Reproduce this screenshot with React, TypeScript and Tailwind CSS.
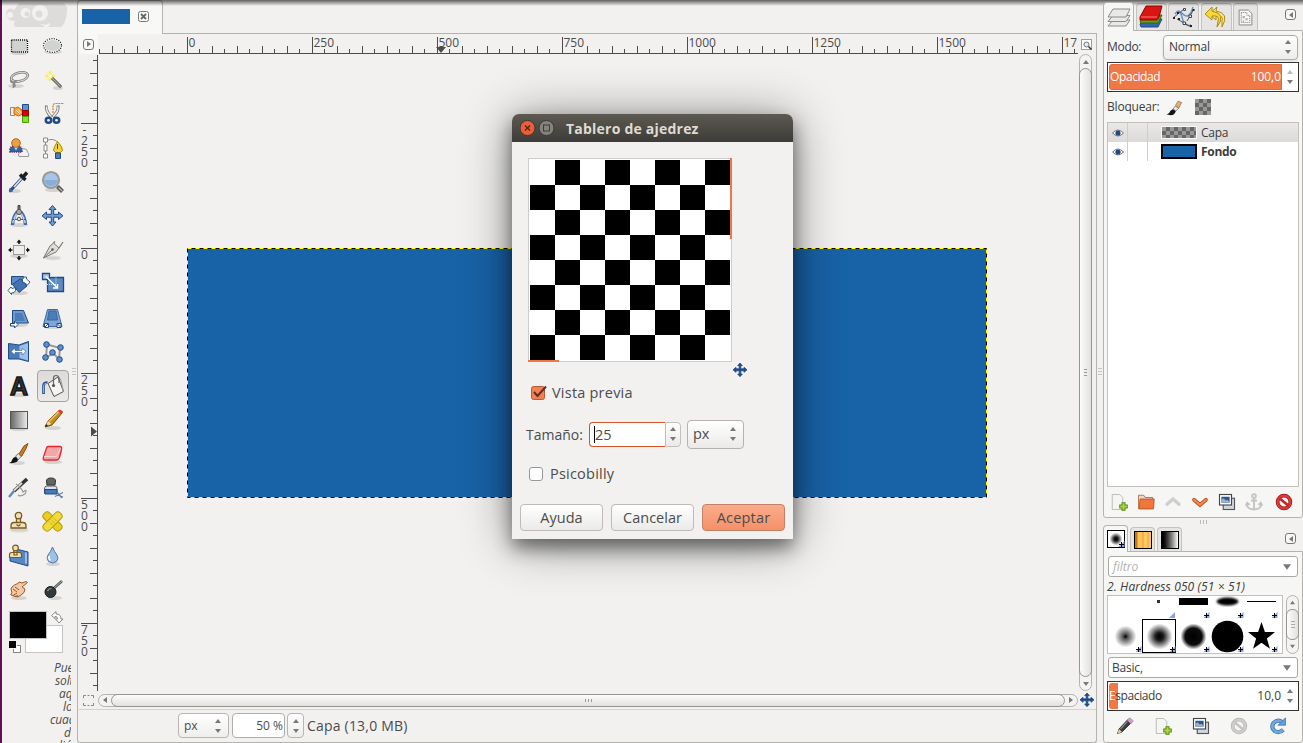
import React from "react";

type Kids = { children?: React.ReactNode };

function Ico({ children, size = 24 }: Kids & { size?: number }) {
  return (
    <svg width={size} height={size} viewBox="0 0 24 24" className="block shrink-0">
      {children}
    </svg>
  );
}

const NAVY = "#204a87";
const STEEL = "#5d8ac2";

const Shade = ({ cx = 12, cy = 20, rx = 9 }: { cx?: number; cy?: number; rx?: number }) => (
  <ellipse cx={cx} cy={cy} rx={rx} ry="2" fill="#000" opacity=".12" />
);

const moveArrows = "M12 1.5 15.5 5.5H13.2V10.3H18V8L22.5 11.8 18 15.5V13.2H13.2V18H15.5L12 22 8.5 18H10.8V13.2H6V15.5L1.5 11.8 6 8V10.3H10.8V5.5H8.5Z";

function MoveIcon({ size = 24, dark = false }: { size?: number; dark?: boolean }) {
  return (
    <Ico size={size}>
      <path d={moveArrows} fill={dark ? NAVY : "#6f9bd1"} stroke={NAVY} strokeWidth={dark ? 1.2 : 1} />
    </Ico>
  );
}

const tools: React.ReactNode[] = [
  <g>
    <Shade cy={19} />
    <rect x="4.5" y="6" width="16" height="12" fill="#d0d3ce" stroke="#fff" strokeWidth="1.2" />
    <rect x="4.5" y="6" width="16" height="12" fill="none" stroke="#000" strokeDasharray="1.1 1" strokeWidth="1.3" />
  </g>,
  <g>
    <Shade cy={18} />
    <ellipse cx="11.5" cy="11.5" rx="9" ry="6.6" fill="#d0d3ce" stroke="#fff" strokeWidth="2" />
    <ellipse cx="11.5" cy="11.5" rx="9" ry="6.8" fill="none" stroke="#222" strokeDasharray="1.2 1.2" strokeWidth="1.2" />
  </g>,
  <g fill="none">
    <Shade cx={9} cy={18} rx={8} />
    <ellipse cx="12.5" cy="9" rx="8.5" ry="4.3" stroke="#777" strokeWidth="2.6" transform="rotate(-14 12 9)" />
    <ellipse cx="12.5" cy="9" rx="8.5" ry="4.3" stroke="#ddd" strokeWidth="1" transform="rotate(-14 12 9)" />
    <path d="M4 12c-1.500 3 4 3 5.500 1M6.500 14v5l1.500-1-1-4" stroke="#888" strokeWidth="1.600" />
  </g>,
  <g>
    <Shade cx={17} cy={20} rx={5} />
    <circle cx="9" cy="8" r="4.500" fill="#fff36b" opacity=".6" />
    <path d="M9 3v10M4 8h10" stroke="#f5e340" strokeWidth="1" />
    <circle cx="9" cy="8" r="1.800" fill="#fffde0" />
    <path d="M11 10 20 19" stroke="#4b4e46" strokeWidth="3" />
    <path d="M11 10 19.500 18.500" stroke="#a8ac9f" strokeWidth="1.300" />
  </g>,
  <g>
    <path d="M3.500 5.500h4v8h-4z" fill="#eee" stroke="#888" />
    <path d="M7 6.500 11 5l4 3 .5 4-4 2-4.500-2z" fill="#f9a23a" stroke="#d06b00" />
    <path d="m9 8 4 4M11 7l3 4" stroke="#fff0cf" strokeWidth=".8" />
    <path d="M15.500 2.500h6v6h-6z" fill="#5f92d1" stroke={NAVY} />
    <path d="M15.500 8.500h6v6h-6z" fill="#d80000" stroke="#900" />
    <path d="M15.500 14.500h6v6h-6z" fill="#8be02a" stroke="#4e9a06" />
  </g>,
  <g fill="none">
    <path d="M12 11V4.500Q12 1.500 15 1.500h8" stroke="#e08010" strokeWidth="1.200" strokeDasharray="2 .7" />
    <path d="M5.500 3.500c-1 4 1.500 8 4.500 11.500M17 3.500c1 4-1.500 8-5.500 11.500" stroke="#7b7d78" strokeWidth="3" />
    <path d="M5.600 4.500c-.5 3 1.500 7 4.300 10M16.900 4.500c.5 3-1.500 7-5 10" stroke="#eee" strokeWidth="1.400" />
    <ellipse cx="7.500" cy="18.200" rx="2.700" ry="2.500" stroke={NAVY} strokeWidth="2.500" />
    <ellipse cx="15.500" cy="18.200" rx="2.700" ry="2.500" stroke={NAVY} strokeWidth="2.500" />
  </g>,
  <g>
    <path d="M12 20.500q-2-3 1-4 0-4 4-3.800 3.500 0 3.500 3.500 2 1 1 4.300z" fill="#f2f2f2" stroke="#999" />
    <path d="M3 16v-3q1-3 4-3h4q4 0 4 6z" fill="#3465a4" stroke="#5c3566" strokeWidth="1.500" strokeDasharray="1.300 .8" />
    <path d="m7 10.500 2 4 2-4" fill="#dde6f2" />
    <circle cx="9" cy="7" r="4.300" fill="#e9a13f" stroke="#b5651d" />
  </g>,
  <g fill="none" stroke="#8a8c88">
    <path d="M4.500 3.500v17M4.500 5q8-4 13 2" />
    <path d="M2.500 2h4v4h-4zM3 9h3v6H3zM2.500 18h4v4h-4z" fill="#fff" />
    <path d="M16.500 5.500q-4 6-4 9l2 2h5l2-2q0-4-5-9z" fill="#eed43a" stroke="#a98600" />
    <path d="M16.500 8v5" stroke="#5a4a00" />
    <path d="M14.500 17h5v5.500h-5z" fill="#4a7dbd" stroke={NAVY} />
  </g>,
  <g>
    <Shade cx={8} cy={21} rx={6} />
    <path d="M4 20 16 7" stroke="#274f83" strokeWidth="3.200" />
    <path d="M7 17 15 8" stroke="#d7e6f7" strokeWidth="1.600" />
    <path d="m3 17.500 3 4-3.500 1q-1.500-2 .5-5z" fill="#3465a4" />
    <path d="m13 4.500 5.500 5.500M15.500 7.500 20 2.500" stroke="#1c1f24" strokeWidth="3.400" />
  </g>,
  <g>
    <Shade cx={12} cy={20} rx={8} />
    <circle cx="10" cy="10" r="8" fill="#a8c4ea" stroke="#999b96" strokeWidth="2.200" />
    <path d="M3.500 10h13a6.500 6 0 0 1-13 0z" fill="#88add9" />
    <path d="m16.500 16.500 5 5" stroke="#555753" strokeWidth="4" />
    <path d="m17.500 17.500 3.500 3.500" stroke="#bbb" strokeWidth="1.300" />
  </g>,
  <g>
    <Shade cy={21} />
    <path d="M10 8Q6 13 5.500 21M14 8q4 5 4.500 13" stroke="#456da5" strokeWidth="3.400" fill="none" />
    <path d="M10 9q-3 5-4.300 10M14 9q3 5 4.300 10" stroke="#b9cde8" strokeWidth="1.500" fill="none" />
    <path d="M11 1.500h2V6h-2z" fill="#777" stroke="#444" />
    <circle cx="12" cy="8" r="2.600" fill="#aaa" stroke="#555" />
    <path d="M5 15.500h14" stroke="#555" strokeDasharray="2 1" />
    <circle cx="12" cy="15" r="1.800" fill="#ddd" stroke="#555" />
  </g>,
  <path d={moveArrows} fill="#6f9bd1" stroke={NAVY} transform="translate(-.5 0)" />,
  <g>
    <Shade cy={18} />
    <rect x="6.500" y="7.500" width="11" height="9" fill="#eee" stroke="#999" />
    <path d="m12 1.500 2.500 3h-5zM12 22.500l2.500-3h-5zM1 12l3-2.500v5zM23 12l-3-2.500v5z" fill="#111" />
    <path d="M12 3v3M12 18v3M3 12h2.500M19 12h2" stroke="#111" strokeWidth="1.600" />
  </g>,
  <g stroke="#777">
    <Shade cx={12} cy={20} rx={8} />
    <path d="M2.500 20 9 8l3.500-3L18 10l-3 4z" fill="#deded9" />
    <path d="M12.500 5 14 3.500M18 10l4-6" strokeWidth="1.200" />
    <path d="M2.500 20 11 12" />
    <circle cx="11.500" cy="11.500" r="1" fill="#555" />
  </g>,
  <g>
    <Shade cy={21} />
    <path d="M4.500 4.500h12v8h-12z" fill={STEEL} stroke={NAVY} />
    <path d="m5.500 12.500 8-6 6.500 7.500-8 6.500z" fill="#4272b0" stroke={NAVY} />
    <path d="M15.500 10V7.500q1-3.500 4-2.500V7l3.500 3-2.500 3-3.500-2.500zM8.500 15.500v3q-1 3-4 2.500v1.500l-3.500-4L4 15l1 1.500z" fill="#fff" stroke={NAVY} strokeWidth=".9" />
  </g>,
  <g>
    <path d="M6.500 5.500h16v14h-16z" fill={STEEL} stroke={NAVY} strokeWidth="1.300" />
    <path d="M1.500 1.500h7v6h-7z" fill="#a8c5e8" stroke={NAVY} strokeWidth="1.300" />
    <path d="M9 4.500h6v8H4.500V9" fill="none" stroke="#cfe0f4" strokeDasharray="1 1" />
    <path d="m5 4.500 11 11M16.500 12v4H12" fill="none" stroke="#fff" strokeWidth="1.500" />
  </g>,
  <g>
    <Shade cy={19} />
    <path d="M5.500 4.500h11l5 12.500h-16z" fill="#6f9acd" stroke={NAVY} />
    <path d="M8 7h7l3 8H8z" fill="#4d7db9" />
    <path d="M3.500 17.500h4v-2.500l3.500 3.500-3.500 3.500V20h-4z" fill="#fff" stroke={NAVY} />
  </g>,
  <g>
    <Shade cy={21} />
    <path d="M6.500 3.500h10l4.500 17H2z" fill="#7fa6d5" stroke="#3f6aa5" />
    <path d="M8 5h7l1.500 9h-10z" fill="#4d7db9" stroke="#3a66a0" />
    <path d="M3.500 17.500h4v4h-4zM16 17.500h4v4h-4z" fill="#fff" stroke={NAVY} />
    <path d="m4 21 3-3M19.500 21l-3-3" stroke={NAVY} />
  </g>,
  <g>
    <path d="M1.500 3.500 12 5l9.500-3.500v20L12 19H1.500z" fill="#4b7ab6" stroke={NAVY} />
    <path d="M12.500 6v12l8.500 2.500V3z" fill="#9fc0e6" />
    <path d="m4 11.500 4-3.500v2.500h7V8l4 3.500-4 3.500v-2.500H8V15z" fill="#fff" stroke="#456da5" strokeWidth=".7" />
  </g>,
  <g>
    <path d="M6 4.500 19 8 18 19 12 13 5 18z" fill="none" stroke="#9a9c98" strokeWidth="2" />
    {[[5.500, 4.500], [19.500, 7.500], [11.500, 12.500], [4.500, 17.500], [18.500, 19.500]].map(([x, y]) => (
      <circle key={`${x}-${y}`} cx={x} cy={y} r="2.800" fill="#5d8fce" stroke={NAVY} />
    ))}
  </g>,
  <g>
    <Shade cy={21} />
    <text x="12" y="20.500" textAnchor="middle" fontFamily="Liberation Sans" fontWeight="700" fontSize="25" fill="#2e3436" stroke="#151515" strokeWidth="1.400">A</text>
  </g>,
  <g>
    <path d="M2.500 20v-8.500q0-3 4-3" stroke={NAVY} strokeWidth="2.600" fill="none" />
    <path d="M2.500 19v-7.500q0-2 3.500-2.500" stroke="#8db0dd" strokeWidth="1" fill="none" />
    <path d="m7 9.500 10-6.500 5.500 14.500-9.500 5z" fill="#f4f4f1" stroke="#555" />
    <path d="m17 3 2.500 2 3 12.500" fill="none" stroke="#999" />
    <path d="M12.500 11V4q0-2.500 2.500-2.500t3 2.500v5" fill="none" stroke="#666" strokeWidth="1.200" />
    <circle cx="12.500" cy="11.500" r="1.600" fill="#555" />
  </g>,
  <g>
    <Shade cy={21} />
    <rect x="3.500" y="3.500" width="17" height="17" fill="url(#gray)" stroke="#555" />
  </g>,
  <g>
    <Shade cx={12} cy={20} rx={8} />
    <path d="m4 19 3-6L18 2.500l3.500 2L11 17z" fill="#c58a22" stroke="#7a4f00" />
    <path d="m8 13.500 10-10" stroke="#efc468" strokeWidth="1.500" />
    <path d="m17 3 2-1.500 3 2L20 6z" fill="#e33" />
    <path d="M4.500 18 7 13l3.500 3z" fill="#eed7a0" />
    <path d="m4 19 1-3 2 1.500z" fill="#222" />
  </g>,
  <g>
    <Shade cx={11} cy={21} rx={7} />
    <path d="m12 12 5-8 4-2.500-2 5-4.500 8z" fill="#d17a22" stroke="#8a4a0c" />
    <path d="m8.500 14 3-2.500 2.500 3-3 3.500z" fill="#e5e5e5" stroke="#777" />
    <path d="M2 21q3-1 3.500-4 2-3 4-1.500Q13 19 8 20.500q-3 1-6 .5z" fill="#111" />
  </g>,
  <g>
    <Shade cy={20} />
    <path d="M7 4.500h12q2 0 1.500 3l-2 8q-1 2.500-3 2.500h-12q-2 0-1-3l3-9q.5-1.500 1.500-1.500z" fill="#f2a7a7" stroke="#e8262a" strokeWidth="1.300" />
    <path d="M3 14.500h12.500l4-8" fill="none" stroke="#f7d5d5" />
  </g>,
  <g>
    <path d="M2 21 7 15" stroke={STEEL} strokeWidth="2.500" />
    <path d="m7 15 13-12" stroke="#333" strokeWidth="3.600" />
    <path d="m7 14.500 8-7.500" stroke="#ddd" strokeWidth="1.800" />
    <path d="M9 8q5 3 7 8 5-4 2 2-5 3-7 1" fill="none" stroke="#999" strokeWidth="1.200" />
  </g>,
  <g>
    <path d="M5 10q-1.500 1-1.500 3v4.500h12.500v-4.500q0-2-1.500-3z" fill="#d8e2f0" stroke="#555" />
    <path d="M4 13.500h12V18H4z" fill="#4a79b7" stroke={NAVY} />
    <path d="M5.500 5q0-3 4.500-3t4.500 3l-.5 4H6z" fill="#626663" stroke="#333" />
    <path d="m14 20.500 8-4M16 16l5 6M22 21l-6-2" stroke="#5f7fae" strokeWidth="1.200" />
  </g>,
  <g fill="#efe0b6" stroke="#7c5a1e" strokeWidth="1.300">
    <Shade cy={20} />
    <path d="M9.500 8.500h4v5h-4z" />
    <circle cx="11.500" cy="5.500" r="3.200" />
    <path d="M7 12.500h9q3 0 3 3.500v2H4v-2q0-3.500 3-3.500z" />
    <path d="m9.500 14.500 2 1.500 2-1.500" />
  </g>,
  <g stroke="#b89600" strokeWidth="1">
    <rect x="0" y="7.500" width="23" height="8" rx="3.500" transform="rotate(45 11.500 11.500)" fill="#e8cf1e" />
    <rect x="0" y="7.500" width="23" height="8" rx="3.500" transform="rotate(-45 11.500 11.500)" fill="#f0dc38" />
    <path d="m8 11.500 4 4M10 9.500l4 4M12 7.500l4 4" stroke="#a98600" strokeDasharray="1 1" />
  </g>,
  <g>
    <path d="m9 5 12 3v14L3 17v-5z" fill="#5787c2" stroke={NAVY} />
    <path d="M19 8.500v11" stroke="#b4d0ef" strokeWidth="1.500" />
    <g fill="#efe0b6" stroke="#7c5a1e" strokeWidth="1.200">
      <path d="M7 6h3v5H7zM4.500 8.500h8q2 0 2 2.500v2.500h-12V11q0-2.500 2-2.500z" />
      <circle cx="8.500" cy="4" r="2.800" />
    </g>
  </g>,
  <g>
    <Shade cy={20} rx={7} />
    <path d="M11.500 3q1.500 4.500 4.500 8 2 4-.5 6.500-3.500 3-8 0Q5 14.500 7 11q3-3.500 4.500-8z" fill="#9fc1e8" stroke="#4a78b4" />
    <path d="M8.500 12q-1.500 2.500 1 4.500" fill="none" stroke="#fff" strokeWidth="1.600" />
  </g>,
  <g>
    <Shade cy={20} rx={8} />
    <path d="M5 9q3-3 6-3.500l1-1.500 3 1 4-1.500 1.500 1L15 9l3 2q0 4-4 6-3 3-6 1.500L4 17q-1-1 1-2l-1-4z" fill="#f2c9a6" stroke="#9d5a27" />
    <path d="m6 11 4 3M8 9l4 3M10 15l-4 2.500M11 17.500l-3 1" stroke="#9d5a27" />
  </g>,
  <g>
    <Shade cx={14} cy={20} rx={7} />
    <path d="m12 11 9-8" stroke="#555753" strokeWidth="2.600" />
    <path d="m13 10 8-7" stroke="#aaa" strokeWidth="1" />
    <circle cx="9.500" cy="14" r="5.500" fill="#33383a" stroke="#1a1c1d" />
    <path d="M6.500 13q1-2.500 4-2.500" stroke="#999" fill="none" strokeWidth="1.200" />
  </g>,
];

const SELECTED_TOOL = 21;

function Wilber() {
  return (
    <svg width="64" height="28" viewBox="0 0 64 28" className="block">
      <path d="M1 12Q4 6 9 10L14 3h44q5 2 4 10-2 12-6 14H12q-5 0-2-6-9 0-9-9z" fill="#dddcdb" />
      <g fill="#f2f1f0">
        <circle cx="5" cy="15" r="3" />
        <circle cx="20.500" cy="13" r="5" />
        <circle cx="35" cy="13" r="8" />
        <path d="M35 24q8 2 10-2v3q-1 2-5 2z" />
      </g>
      <circle cx="22" cy="14" r="2.500" fill="#dddcdb" />
      <circle cx="34" cy="14" r="3.500" fill="#dddcdb" />
    </svg>
  );
}

const hint: [string, string][] = [
  ["Puede", "pl-[52px]"],
  ["soltar", "pl-[53px]"],
  ["aquí", "pl-[57px]"],
  ["los", "pl-[61px]"],
  ["cuadros", "pl-[48px]"],
  ["de", "pl-[62px]"],
  ["diálogos", "pl-[53px]"],
];

function Toolbox() {
  return (
    <aside className="flex w-[75px] shrink-0 flex-col overflow-hidden">
      <div className="h-[29px] shrink-0 pl-[3px]">
        <Wilber />
      </div>
      <div className="grid w-[68px] grid-cols-[34px_34px] auto-rows-[34px]">
        {tools.map((t, i) => (
          <div
            key={i}
            className={
              i === SELECTED_TOOL
                ? "m-px flex items-center justify-center rounded-[4px] border border-[#a5a3a0] bg-gradient-to-b from-[#dddbd9] to-[#eceae8]"
                : "flex items-center justify-center"
            }
          >
            <Ico>{t}</Ico>
          </div>
        ))}
      </div>
      <div className="mt-[4px] ml-[7px] h-[43px] w-[56px] shrink-0">
        <svg width="56" height="43" viewBox="0 0 56 43" className="block">
          <rect x="16.500" y="14.500" width="37" height="27" fill="#fff" stroke="#c6c3c0" />
          <rect x=".5" y=".5" width="37" height="27" fill="#000" stroke="#c6c3c0" />
          <rect x="4.500" y="34.500" width="7" height="7" fill="#fff" stroke="#888" />
          <rect x="0" y="30" width="8" height="8" fill="#f2f1f0" />
          <rect x="0" y="30" width="7" height="7" fill="#000" />
          <path d="m42.500 4.500 4.500-4v2.500q5 0 5 5h2l-4 4-3.500-4h2q0-3-2.500-2.500v2z" fill="#fff" stroke="#888" />
        </svg>
      </div>
      <div className="mt-[7px] w-[69px] overflow-hidden whitespace-nowrap text-[12px] leading-[13px] text-[#4c4c4c] italic tracking-[-0.150px]">
        {hint.map(([word, pad]) => (
          <div key={word} className={pad}>
            {word}
          </div>
        ))}
      </div>
    </aside>
  );
}

function range(from: number, to: number) {
  const out: number[] = [];
  for (let k = from; k <= to; k++) out.push(k);
  return out;
}

const tickLen = (k: number) => (k % 10 === 0 ? 16 : k % 2 === 0 ? 7 : 4);

function HRuler() {
  return (
    <svg width="980" height="18" viewBox="98 36 980 18" className="block" fontFamily="Open Sans" fontSize="12">
      <path d="M99 53.500H1078" stroke="#4c4c4c" />
      {range(-7, 71).map((k) => {
        const x = Math.floor(187 + k * 12.5) + 0.5;
        return <path key={k} d={`M${x} ${53 - tickLen(k)}V53`} stroke="#4c4c4c" />;
      })}
      {range(0, 7).map((n) => (
        <text key={n} x={188.5 + n * 125} y="47" fill="#4c4c4c">
          {n * 250}
        </text>
      ))}
      <path d="M436 47h10l-5 6z" fill="#4c4c4c" />
    </svg>
  );
}

function VRuler() {
  return (
    <svg width="19" height="637" viewBox="79 54 19 637" className="block" fontFamily="Open Sans" fontSize="12" textAnchor="middle">
      <path d="M97.500 55V691" stroke="#4c4c4c" />
      {range(-15, 35).map((k) => {
        const y = Math.floor(248 + k * 12.5) + 0.5;
        return <path key={k} d={`M${97 - tickLen(k)} ${y}H97`} stroke="#4c4c4c" />;
      })}
      {range(-1, 3).map((n) =>
        String(n * 250)
          .split("")
          .map((c, i) => (
            <text key={`${n}-${i}`} x="84.500" y={259 + n * 125 + i * 11} fill="#4c4c4c">
              {c}
            </text>
          )),
      )}
      <path d="M91 426.500v10l6-5z" fill="#4c4c4c" />
    </svg>
  );
}

function Tri({ dir, dim = false, s = 6 }: { dir: "up" | "down" | "left" | "right"; dim?: boolean; s?: number }) {
  const d = { up: "M0 5 3 1 6 5z", down: "M0 1 3 5 6 1z", left: "M5 0 1 3 5 6z", right: "M1 0 5 3 1 6z" }[dir];
  return (
    <svg width={s} height={s} viewBox="0 0 6 6" className="block shrink-0">
      <path d={d} fill={dim ? "#bbb" : "#7a7977"} />
    </svg>
  );
}

function Spin({ dimUp = false }: { dimUp?: boolean }) {
  return (
    <span className="flex flex-col items-center gap-[4px]">
      <Tri dir="up" dim={dimUp} />
      <Tri dir="down" />
    </span>
  );
}

function MenuBox({ dir }: { dir: "left" | "right" }) {
  return (
    <span className="flex size-[11px] items-center justify-center rounded-[3px] border border-[#777] bg-[#f8f8f7]">
      <Tri dir={dir} s={6} />
    </span>
  );
}

function VScroll() {
  return (
    <div className="flex h-[637px] w-[13px] flex-col rounded-[7px] border border-[#b5b3b0] bg-[#f4f3f2]">
      <div className="flex h-[13px] items-center justify-center"><Tri dir="up" /></div>
      <div className="-mx-px flex flex-1 flex-col items-center justify-center gap-[2px] rounded-[7px] border border-[#979592] bg-gradient-to-r from-[#fcfcfc] to-[#e2e1df]">
        <i className="h-px w-[3px] bg-[#999]" />
        <i className="h-px w-[3px] bg-[#999]" />
        <i className="h-px w-[3px] bg-[#999]" />
      </div>
      <div className="flex h-[13px] items-center justify-center"><Tri dir="down" /></div>
    </div>
  );
}

function HScroll() {
  return (
    <div className="flex h-[13px] w-[980px] rounded-[7px] border border-[#b5b3b0] bg-[#f4f3f2]">
      <div className="flex w-[12px] items-center justify-center"><Tri dir="left" /></div>
      <div className="-my-px flex flex-1 items-center justify-center gap-[2px] rounded-[7px] border border-[#979592] bg-gradient-to-b from-[#fcfcfc] to-[#e2e1df]">
        <i className="h-[3px] w-px bg-[#999]" />
        <i className="h-[3px] w-px bg-[#999]" />
        <i className="h-[3px] w-px bg-[#999]" />
      </div>
      <div className="flex w-[12px] items-center justify-center"><Tri dir="right" /></div>
    </div>
  );
}

function ImageWindow() {
  return (
    <main className="flex w-[1020px] shrink-0 flex-col">
      <div className="flex h-[34px]">
        <div className="flex w-[86px] items-start rounded-t-[4px] border-x border-t border-[#b5b3b0] bg-[#f8f8f7]">
          <div className="mt-[8px] ml-[4px] h-[15px] w-[48px] bg-[#1862a7]" />
          <svg width="11" height="11" viewBox="0 0 11 11" className="mt-[10px] ml-[8px]">
            <rect x=".5" y=".5" width="10" height="10" rx="2" fill="#f8f8f7" stroke="#777" />
            <path d="m3 3 5 5M8 3 3 8" stroke="#666" strokeWidth="1.800" />
          </svg>
        </div>
        <div className="flex-1 border-b border-[#b5b3b0]" />
      </div>
      <div className="flex h-[709px] flex-col rounded-b-[3px] border-x border-b border-[#b5b3b0] pl-px">
        <div className="flex h-[20px]">
          <div className="flex w-[19px] items-center justify-center bg-[#f8f8f7]"><MenuBox dir="right" /></div>
          <div className="mt-[2px] w-[980px]"><HRuler /></div>
          <div className="flex w-[17px] items-center justify-center">
            <svg width="11" height="11" viewBox="0 0 11 11">
              <rect x=".5" y=".5" width="10" height="10" fill="#fff" stroke={NAVY} strokeDasharray="1 1" />
              <circle cx="5.500" cy="5.500" r="2.500" fill="#dfe8f4" stroke="#777" />
              <path d="m7.500 7.500 3 3" stroke="#333" strokeWidth="1.500" />
            </svg>
          </div>
        </div>
        <div className="flex h-[637px]">
          <VRuler />
          <div className="h-[637px] w-[981px] overflow-hidden pt-[194px] pl-[89px]">
            <svg width="800" height="250" viewBox="0 0 800 250" className="block">
              <rect width="800" height="250" fill="#1862a7" />
              <rect x=".5" y=".5" width="799" height="249" fill="none" stroke="#ffff00" />
              <rect x=".5" y=".5" width="799" height="249" fill="none" stroke="#000" strokeDasharray="4 4" strokeDashoffset="4" />
            </svg>
          </div>
          <VScroll />
        </div>
        <div className="flex h-[19px] items-center border-b border-[#d5d3d1]">
          <div className="flex w-[19px] justify-center">
            <svg width="11" height="11" viewBox="0 0 11 11">
              <path d="M.5 3V.5H3M8 .5h2.500V3M10.500 8v2.500H8M3 10.500H.5V8M4.500.5h2M4.500 10.500h2" fill="none" stroke="#888" />
            </svg>
          </div>
          <HScroll />
          <div className="-mr-2 pl-px"><MoveIcon size={16} dark /></div>
        </div>
        <div className="flex h-[31px] items-center pl-[99px] text-[14px] text-[#4c4c4c]">
          <div className="flex h-[25px] w-[51px] items-center justify-between rounded-[4px] border border-[#b8b5b2] bg-gradient-to-b from-white to-[#efeeed] pr-[7px] pl-[5px] text-[12px]">
            px <Spin />
          </div>
          <div className="ml-[3px] flex h-[25px] w-[53px] items-center justify-end rounded-[4px] border border-[#b0aeab] bg-white pr-px text-[12px]">50 %</div>
          <div className="ml-[2px] flex h-[25px] w-[17px] items-center justify-center rounded-[4px] border border-[#b8b5b2] bg-gradient-to-b from-white to-[#efeeed]">
            <Spin />
          </div>
          <span className="ml-[3px] whitespace-nowrap tracking-[0.200px]">Capa (13,0 MB)</span>
        </div>
      </div>
    </main>
  );
}

function NewPage() {
  return (
    <g>
      <path d="M3 2h10l4 4v16H3z" fill="#f5f5f4" stroke="#aaa" />
      <path d="M16 13h4v3h3v4h-3v3h-4v-3h-3v-4h3z" fill="#a8d840" stroke="#5c8c10" strokeWidth="1.400" />
    </g>
  );
}
function Duplicate() {
  return (
    <g strokeWidth="1.500">
      <rect x="7" y="7" width="15" height="15" fill="#cfd6df" stroke="#555" />
      <rect x="2" y="2" width="16" height="14" fill="#fff" stroke="#444" />
      <path d="M4.500 5h11v8h-11z" fill="#2f578f" />
      <path d="M4.500 13V9l3-2 3 3 2-1 3 3v1z" fill="#9ab2cf" />
    </g>
  );
}
function Forbid({ dim = false }: { dim?: boolean }) {
  return (
    <g fill="none">
      <circle cx="12" cy="12" r="8.500" stroke={dim ? "#b5b4b2" : "#a31515"} strokeWidth="5" />
      <circle cx="12" cy="12" r="8.500" stroke={dim ? "#cfcecc" : "#d83a3e"} strokeWidth="3" />
      <path d="m6 7 12 10" stroke={dim ? "#c5c4c2" : "#c9252a"} strokeWidth="3.600" />
    </g>
  );
}

const brushIcon = (
  <g>
    <path d="M1 22q4-1 5-5l4-3 4 3q-2 6-7 6z" fill="#151515" />
    <path d="m10 14 3-4 5 3-4 4z" fill="#e8e8e8" stroke="#666" />
    <path d="m13.500 9 3.500-6 5 2-4 8z" fill="#e0b077" stroke="#996a35" />
  </g>
);

const dockTabs: React.ReactNode[] = [
  <g fill="#e9e9e8" stroke="#8b8b89">
    <path d="m1 21 5-6h17l-4 6z" /><path d="m1 16.500 5-6h17l-4 6z" /><path d="m1 12 5-8h17l-4 8z" />
  </g>,
  <g strokeWidth="1">
    <path d="m1 19 5-5h17l-4 8H2z" fill="#3465a4" stroke={NAVY} />
    <path d="m1 16 5-6h17l-4 8H2z" fill="#55a520" stroke="#2f6d08" />
    <path d="M1 12 7 1h16l-3 11-2 3H1z" fill="#d81414" stroke="#900" />
    <path d="M2 12h16" stroke="#ff7777" />
  </g>,
  <g fill="none" stroke="#444">
    <path d="M3 9q4-6 6 0t2 7q4 6 8 4M9 7q8 10 12-5" stroke="#6b94c8" strokeWidth="1.500" />
    <path d="m1 13 11-9M15 16 22 4M5 14l14 8" strokeWidth=".9" />
    <path d="M11.500 3.500h2v2h-2zM17 10h2.500v2.500H17zM11 17h2.500v2.500H11z" fill="#fff" />
    <path d="M1 12h2v2H1zM5 7h2v2H5zM20.500 4h2v2h-2zM18 20h2v2h-2zM6 13h2v2H6z" fill="#222" stroke="none" />
  </g>,
  <g strokeWidth="1" stroke="#b08d10">
    <path d="M13 2 5 9l7 6v-4q8-1 6 5v6q8-14-6-16z" fill="#f3e49a" />
    <path d="M8 2 1 9l7 6v-4q8-1 6 5l-1 6q10-13-5-16z" fill="#f7d63a" />
  </g>,
  <g>
    <path d="M3 1.500h13l5 5v16H3z" fill="#f7f7f7" stroke="#888" strokeWidth="1.400" />
    <path d="M6 5h8v4h4v10H6z" fill="none" stroke="#777" strokeWidth="1.400" strokeDasharray="1.400 1.400" />
    <path d="M8 10h3v3H8zM12 13h3v3h-3zM8 16h2v2H8z" fill="#aaa" />
  </g>,
];

function LayerRow({ name, current = false }: { name: string; current?: boolean }) {
  return (
    <div className={current ? "flex h-[19px] items-center bg-gradient-to-b from-[#eae9e8] to-[#dbdad8]" : "flex h-[19px] items-center font-bold"}>
      <div className="flex h-full w-[20px] items-center justify-center border-r border-[#d0cecc]">
        <svg width="12" height="8" viewBox="0 0 12 8">
          <path d="M.5 4Q6-2 11.500 4 6 10 .5 4z" fill="#fff" stroke="#777" />
          <circle cx="6" cy="4" r="2.600" fill="#204a87" />
        </svg>
      </div>
      <div className="h-full w-[20px] border-r border-[#d0cecc]" />
      <div
        className={
          current
            ? "ml-[13px] h-[13px] w-[36px] border border-[#f8f8f8] bg-[repeating-conic-gradient(#666_0_25%,#999_0_50%)] bg-[length:8px_8px]"
            : "ml-[13px] h-[15px] w-[36px] border-2 border-black bg-[#1862a7]"
        }
      />
      <span className="ml-[4px] tracking-[-0.300px]">{name}</span>
    </div>
  );
}

function Slider({ label, value, thin = false }: { label: string; value: string; thin?: boolean }) {
  return (
    <div className="flex h-[30px] w-[192px] items-center border border-[#333] bg-white p-px">
      <div
        className={
          thin
            ? "flex h-full w-[173px] items-center justify-between rounded-[3px] bg-[linear-gradient(90deg,#f07746_9px,#fff_9px)]"
            : "flex h-full w-[173px] items-center justify-between rounded-l-[3px] border border-[#e06a3a] bg-[#f07746] text-white"
        }
      >
        <span className="tracking-[-0.400px]">
          {thin ? <><span className="text-white">{label[0]}</span>{label.slice(1)}</> : label}
        </span>
        <span className={thin ? "pr-px" : "tracking-[-0.050px]"}>{value}</span>
      </div>
      <div className="flex flex-1 justify-center"><Spin dimUp={!thin} /></div>
    </div>
  );
}

function Plus({ x, y }: { x: number; y: number }) {
  return (
    <g>
      <path d={`M${x + 3} ${y - 3}v6h-6z`} fill="#8aa0ee" />
      <path d={`M${x - 2.5} ${y + 0.5}h5M${x} ${y - 2}v5`} stroke="#000" />
    </g>
  );
}

function BrushGrid() {
  return (
    <svg width="174" height="57" viewBox="1108 596 174 57" className="block">
      <rect x="1157" y="600" width="3" height="3" fill="#333" />
      <path d="M1179 598h29v7h-29z" fill="#000" filter="url(#soft)" />
      <ellipse cx="1227.500" cy="601.500" rx="11" ry="4" fill="#000" filter="url(#soft1)" />
      <path d="M1247 601.500h29" stroke="#000" />
      <circle cx="1125.500" cy="636.500" r="11" fill="url(#b1)" />
      <rect x="1142.500" y="619.500" width="33" height="33" fill="#fff" stroke="#000" />
      <circle cx="1159.500" cy="636.500" r="13" fill="url(#b2)" />
      <circle cx="1193.500" cy="636.500" r="13" fill="url(#b3)" />
      <circle cx="1227.500" cy="636.500" r="15.800" fill="#000" />
      <path d="m1261.500 622 3.400 10h10.100l-8.100 6.500 3 10.200-8.400-6-8.400 6 3-10.200-8.100-6.500h10.100z" fill="#000" />
      <path d="M1175 612v6h-6z" fill="#8aa0ee" />
      <Plus x={1206.5} y={615} /><Plus x={1240.5} y={615} /><Plus x={1274.5} y={615} />
      <Plus x={1138.5} y={649} /><Plus x={1172.5} y={649} /><Plus x={1206.5} y={649} /><Plus x={1240.5} y={649} /><Plus x={1274.5} y={649} />
    </svg>
  );
}

function Dock() {
  return (
    <aside className="flex w-[200px] shrink-0 flex-col text-[12px] text-[#3c3c3c]">
      <div className="flex h-[30px] items-end justify-between pr-[7px]">
        <div className="flex h-[28px] items-end">
          {dockTabs.map((t, i) => (
            <div
              key={i}
              className={
                i === 0
                  ? "z-[1] -mb-px flex h-[29px] w-[31px] items-center justify-center rounded-t-[4px] border border-b-0 border-[#b5b3b0] bg-[#f7f7f6]"
                  : i === 4
                    ? "ml-px flex h-[27px] w-[25px] items-center justify-center rounded-t-[4px] border border-b-0 border-[#c5c3c0] bg-[#e6e5e3]"
                    : "ml-[1.500px] flex h-[27px] w-[31px] items-center justify-center rounded-t-[4px] border border-b-0 border-[#c5c3c0] bg-[#e6e5e3]"
              }
            >
              <Ico size={i === 4 ? 17 : 24}>{t}</Ico>
            </div>
          ))}
        </div>
        <div className="mb-[10px]"><MenuBox dir="left" /></div>
      </div>
      <section className="flex h-[488px] flex-col rounded-b-[3px] border border-[#b5b3b0] bg-[#f6f6f5] pl-[3px]">
        <div className="mt-[3px] flex h-[26px] items-center">
          <span className="w-[56px] tracking-[-0.300px]">Modo:</span>
          <div className="flex h-[25px] w-[135px] items-center justify-between rounded-[4px] border border-[#b0aeab] bg-gradient-to-b from-white to-[#ececea] pr-[6px] pl-[5px] text-[12px] shadow-sm">
            <span className="tracking-[-0.200px]">Normal</span> <Spin />
          </div>
        </div>
        <div className="mt-[2px]"><Slider label="Opacidad" value="100,0" /></div>
        <div className="flex h-[30px] items-center">
          <span className="w-[59px] tracking-[-0.200px]">Bloquear:</span>
          <Ico size={17}>{brushIcon}</Ico>
          <div className="ml-[12px] size-[16px] bg-[repeating-conic-gradient(#666_0_25%,#999_0_50%)] bg-[length:8px_8px]" />
        </div>
        <div className="h-[365px] w-[192px] border border-[#c3c0bd] bg-white">
          <LayerRow name="Capa" current />
          <LayerRow name="Fondo" />
        </div>
        <div className="flex h-[30px] w-[192px] items-center gap-[9px] pl-[3px]">
          <Ico size={18}><NewPage /></Ico>
          <Ico size={18}><path d="M2 3h7l2 3h10v15H2z" fill="#e6d8cf" stroke="#a8552a" /><path d="M4 8h19l-1 13H3z" fill="#f0763c" stroke="#c04a15" /></Ico>
          <Ico size={18}><path d="m4 15 8-7 8 7" fill="none" stroke="#cfcecc" strokeWidth="4.500" strokeLinecap="round" /></Ico>
          <Ico size={18}><path d="m4 9 8 7 8-7" fill="none" stroke="#c0501c" strokeWidth="5" strokeLinecap="round" /><path d="m4 9 8 7 8-7" fill="none" stroke="#f58a52" strokeWidth="2.600" strokeLinecap="round" /></Ico>
          <Ico size={18}><Duplicate /></Ico>
          <Ico size={18}><g fill="none" stroke="#c5c4c2" strokeWidth="2.500"><circle cx="12" cy="4" r="2.500" /><path d="M12 7v15M8 10h8M2 14q1 8 10 8t10-8M1 17l2-4 3 3M23 17l-2-4-3 3" /></g></Ico>
          <span className="ml-[3px]"><Ico size={18}><Forbid /></Ico></span>
        </div>
      </section>
      <div className="flex h-[8px] items-center justify-center gap-[2px]">
        <i className="h-[4px] w-px bg-[#bbb]" /><i className="h-[4px] w-px bg-[#bbb]" /><i className="h-[4px] w-px bg-[#bbb]" />
      </div>
      <div className="flex h-[25px] items-end justify-between pr-[7px]">
        <div className="flex items-end gap-[2px]">
          <div className="z-[1] -mb-px flex h-[27px] w-[25px] items-center justify-center rounded-t-[4px] border border-b-0 border-[#b5b3b0] bg-[#f7f7f6]">
            <svg width="18" height="18" viewBox="0 0 18 18">
              <rect x=".5" y=".5" width="17" height="17" fill="#fff" stroke="#000" />
              <circle cx="9" cy="9" r="6.500" fill="url(#b2)" />
              <Plus x={14.5} y={14} />
            </svg>
          </div>
          <div className="flex h-[24px] w-[25px] items-center justify-center rounded-t-[4px] border border-b-0 border-[#c5c3c0] bg-[#e6e5e3]">
            <div className="size-[18px] border border-black bg-[linear-gradient(90deg,#c8741c_0_2px,#ffc45a_3px_7px,#eb9a35_8px,#ffcb66_9px_12px,#efa03a_13px,#ffc860_14px)]" />
          </div>
          <div className="flex h-[24px] w-[25px] items-center justify-center rounded-t-[4px] border border-b-0 border-[#c5c3c0] bg-[#e6e5e3]">
            <div className="size-[18px] border border-black bg-gradient-to-r from-black to-white" />
          </div>
        </div>
        <div className="mb-[7px]"><MenuBox dir="left" /></div>
      </div>
      <section className="flex h-[192px] flex-col rounded-b-[3px] border border-[#b5b3b0] bg-[#f6f6f5] pl-[3px]">
        <div className="mt-[4px] ml-px flex h-[21px] w-[190px] items-center justify-between rounded-[3px] border border-[#aaa8a5] bg-white pr-[6px] pl-[4px] text-[#b3b1af] italic">
          filtro <Tri dir="down" s={8} />
        </div>
        <div className="h-[18px] text-[12px] leading-[19px] tracking-[0.120px] whitespace-nowrap italic">2. Hardness 050 (51 × 51)</div>
        <div className="flex h-[59px] gap-[3px]">
          <div className="w-[176px] border border-[#c3c0bd] bg-white"><BrushGrid /></div>
          <div className="flex w-[13px] flex-col rounded-[7px] border border-[#b5b3b0] bg-[#f4f3f2]">
            <div className="flex h-[13px] items-center justify-center"><Tri dir="up" s={5} /></div>
            <div className="-mx-px flex h-[31px] flex-col items-center justify-center gap-[2px] rounded-[6px] border border-[#979592] bg-gradient-to-r from-[#fcfcfc] to-[#e2e1df]">
              <i className="h-px w-[4px] bg-[#aaa]" /><i className="h-px w-[4px] bg-[#aaa]" /><i className="h-px w-[4px] bg-[#aaa]" />
            </div>
            <div className="flex h-[13px] items-center justify-center"><Tri dir="down" s={5} /></div>
          </div>
        </div>
        <div className="mt-[3px] ml-px flex h-[21px] w-[190px] items-center justify-between rounded-[3px] border border-[#aaa8a5] bg-white pr-[6px] pl-[3px]">
          <span className="tracking-[-0.200px]">Basic,</span> <Tri dir="down" s={8} />
        </div>
        <div className="mt-[3px]"><Slider label="Espaciado" value="10,0" thin /></div>
        <div className="flex h-[30px] w-[192px] items-center gap-[20px] pl-[9px]">
          <Ico size={18}>
            <path d="m2 22 2-6L16 3l5 4L8 20z" fill="#3b3d3c" stroke="#222" />
            <path d="m6 16 9-10" stroke="#888" strokeWidth="1.500" />
            <path d="m15 4 3-3 5 4-3 4z" fill="#d99ad0" stroke="#999" />
            <path d="m2 22 2-6 4 4z" fill="#e8d0a0" />
          </Ico>
          <Ico size={18}><NewPage /></Ico>
          <Ico size={18}><Duplicate /></Ico>
          <Ico size={18}><Forbid dim /></Ico>
          <span className="ml-px">
            <Ico size={18}>
              <path d="M19 17q-5 5-11 2-6-5-2-11 6-6 12-1" fill="none" stroke="#3f78b8" strokeWidth="5.500" />
              <path d="M19 17q-5 5-11 2-6-5-2-11 6-6 12-1" fill="none" stroke="#72a7dc" strokeWidth="3.500" />
              <path d="M22 1v10H12z" fill="#62a0dc" stroke="#3f78b8" />
            </Ico>
          </span>
        </div>
      </section>
    </aside>
  );
}

function DialogButton({ children, primary = false }: Kids & { primary?: boolean }) {
  return (
    <button
      className={
        primary
          ? "h-[27px] w-[83px] rounded-[4px] border border-[#c5806a] bg-gradient-to-b from-[#fbac8c] to-[#f49068] tracking-[0.200px]"
          : "h-[27px] w-[83px] rounded-[4px] border border-[#bebbb8] bg-gradient-to-b from-white to-[#ebeae9]"
      }
    >
      {children}
    </button>
  );
}

function ChessDialog() {
  return (
    <div className="absolute top-[114px] left-[512px] flex h-[425px] w-[281px] flex-col rounded-t-[7px] bg-[#f2f1f0] text-[14.500px] text-[#4c4c4c] shadow-[0_9px_18px_rgba(0,0,0,0.45),0_4px_50px_rgba(0,0,0,0.45)]">
      <div className="flex h-[28px] shrink-0 items-center rounded-t-[7px] bg-gradient-to-b from-[#5c5a51] to-[#3d3c38] pl-[8px] text-[14px] font-bold text-[#dfdbd2]">
        <svg width="36" height="18" viewBox="0 0 36 18" className="block">
          <circle cx="7.500" cy="9" r="7.500" fill="#ec5f34" stroke="#3a3934" />
          <path d="m5 6.500 5 5M10 6.500l-5 5" stroke="#56210f" strokeWidth="1.300" />
          <circle cx="26.500" cy="9" r="7.500" fill="#85837a" stroke="#3a3934" />
          <rect x="23.500" y="6" width="6" height="6" fill="none" stroke="#3d3c38" />
        </svg>
        <span className="ml-[10px] whitespace-nowrap tracking-[0.220px]">Tablero de ajedrez</span>
      </div>
      <div className="relative mt-[16px] ml-[16px] size-[204px] shrink-0 border border-[#cfcdca] bg-white p-px">
        <div className="size-[200px] bg-[repeating-conic-gradient(#000_0_25%,#fff_0_50%)] bg-[length:50px_50px]" />
        <i className="absolute -top-px -right-px h-[81px] w-[2px] bg-[#f07746]" />
        <i className="absolute -bottom-px -left-px h-[2px] w-[31px] bg-[#f07746]" />
      </div>
      <div className="ml-[220px] h-[16px]"><MoveIcon size={16} dark /></div>
      <div className="mt-[5px] ml-[18px] flex h-[20px] shrink-0 items-center">
        <svg width="17" height="16" viewBox="0 0 17 16">
          <rect x="1.500" y="1.500" width="13" height="13" rx="2" fill="#f08055" stroke="#b95a35" />
          <path d="m4 7 3.500 4L16 1.500" fill="none" stroke="#5d3020" strokeWidth="2" />
        </svg>
        <span className="ml-[5px] tracking-[0.220px]">Vista previa</span>
      </div>
      <div className="mt-[16px] ml-[14px] flex h-[30px] shrink-0 items-center">
        <span className="w-[63px] text-[14px]">Tamaño:</span>
        <div className="flex h-[25px] w-[76px] items-center rounded-l-[4px] border border-r-0 border-[#d4552a] bg-white pl-[4px]">
          <i className="h-[17px] w-px bg-black" /><span className="pt-px">25</span>
        </div>
        <div className="flex h-[25px] w-[16px] items-center justify-center rounded-r-[4px] border border-[#c2bfbc] bg-gradient-to-b from-white to-[#ebeae9]"><Spin /></div>
        <div className="ml-[6px] flex h-[29px] w-[57px] items-center justify-between rounded-[4px] border border-[#b5b2af] bg-gradient-to-b from-white to-[#ebeae9] pr-[7px] pl-[5px]">
          px <Spin />
        </div>
      </div>
      <div className="mt-[15px] ml-[17px] flex h-[20px] shrink-0 items-center">
        <i className="size-[14px] rounded-[3px] border border-[#999] bg-white" />
        <span className="ml-[7px] tracking-[0.220px]">Psicobilly</span>
      </div>
      <div className="mt-[20px] ml-[8px] flex gap-[8px]">
        <DialogButton>Ayuda</DialogButton>
        <DialogButton>Cancelar</DialogButton>
        <DialogButton primary>Aceptar</DialogButton>
      </div>
    </div>
  );
}

function Defs() {
  return (
    <svg width="0" height="0" className="absolute">
      <defs>
        <linearGradient id="gray"><stop stopColor="#666" /><stop offset="1" stopColor="#eee" /></linearGradient>
        <radialGradient id="b1"><stop stopColor="#000" /><stop offset=".25" stopColor="#000" stopOpacity=".65" /><stop offset="1" stopColor="#000" stopOpacity="0" /></radialGradient>
        <radialGradient id="b2"><stop stopColor="#000" /><stop offset=".3" stopColor="#000" stopOpacity=".9" /><stop offset="1" stopColor="#000" stopOpacity="0" /></radialGradient>
        <radialGradient id="b3"><stop stopColor="#000" /><stop offset=".65" stopColor="#000" stopOpacity=".95" /><stop offset="1" stopColor="#000" stopOpacity="0" /></radialGradient>
        <filter id="soft"><feGaussianBlur stdDeviation=".5" /></filter>
        <filter id="soft1"><feGaussianBlur stdDeviation="1.300" /></filter>
      </defs>
    </svg>
  );
}

function Grip() {
  return (
    <span className="flex flex-col gap-[2px]">
      <i className="h-px w-[4px] bg-[#c5c3c1]" /><i className="h-px w-[4px] bg-[#c5c3c1]" /><i className="h-px w-[4px] bg-[#c5c3c1]" />
    </span>
  );
}

export default function App() {
  return (
    <div className="relative flex h-[743px] w-[1303px] overflow-hidden bg-[#f2f1f0] font-['Open_Sans','Noto_Sans',sans-serif]">
      <Defs />
      <div className="w-[2px] shrink-0 bg-[#5c1153]" />
      <Toolbox />
      <ImageWindow />
      <div className="flex w-[6px] shrink-0 items-center justify-center"><Grip /></div>
      <Dock />
      <div className="absolute top-[368px] left-[72px]"><Grip /></div>
      <ChessDialog />
      <div className="pointer-events-none absolute inset-x-0 top-0 h-[6px] bg-gradient-to-b from-black/60 to-transparent" />
    </div>
  );
}
